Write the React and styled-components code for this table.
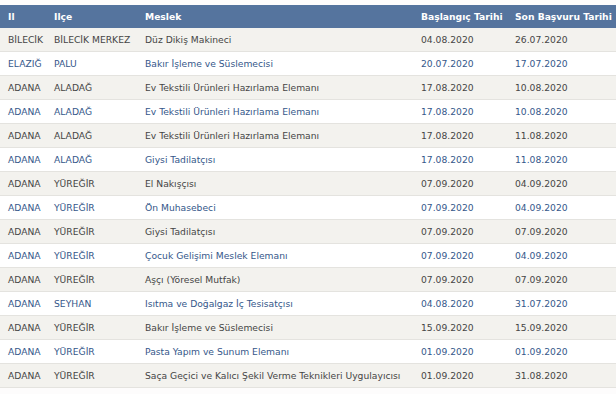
import styled, { createGlobalStyle } from "styled-components"

const GlobalStyle = createGlobalStyle`
  html, body { margin: 0; padding: 0; background: #ffffff; }
  body { font-family: "DejaVu Sans", Verdana, sans-serif; }
`

const rows = [
  ["BİLECİK", "BİLECİK MERKEZ", "Düz Dikiş Makineci", "04.08.2020", "26.07.2020"],
  ["ELAZIĞ", "PALU", "Bakır İşleme ve Süslemecisi", "20.07.2020", "17.07.2020"],
  ["ADANA", "ALADAĞ", "Ev Tekstili Ürünleri Hazırlama Elemanı", "17.08.2020", "10.08.2020"],
  ["ADANA", "ALADAĞ", "Ev Tekstili Ürünleri Hazırlama Elemanı", "17.08.2020", "10.08.2020"],
  ["ADANA", "ALADAĞ", "Ev Tekstili Ürünleri Hazırlama Elemanı", "17.08.2020", "11.08.2020"],
  ["ADANA", "ALADAĞ", "Giysi Tadilatçısı", "17.08.2020", "11.08.2020"],
  ["ADANA", "YÜREĞİR", "El Nakışçısı", "07.09.2020", "04.09.2020"],
  ["ADANA", "YÜREĞİR", "Ön Muhasebeci", "07.09.2020", "04.09.2020"],
  ["ADANA", "YÜREĞİR", "Giysi Tadilatçısı", "07.09.2020", "07.09.2020"],
  ["ADANA", "YÜREĞİR", "Çocuk Gelişimi Meslek Elemanı", "07.09.2020", "04.09.2020"],
  ["ADANA", "YÜREĞİR", "Aşçı (Yöresel Mutfak)", "07.09.2020", "07.09.2020"],
  ["ADANA", "SEYHAN", "Isıtma ve Doğalgaz İç Tesisatçısı", "04.08.2020", "31.07.2020"],
  ["ADANA", "YÜREĞİR", "Bakır İşleme ve Süslemecisi", "15.09.2020", "15.09.2020"],
  ["ADANA", "YÜREĞİR", "Pasta Yapım ve Sunum Elemanı", "01.09.2020", "01.09.2020"],
  ["ADANA", "YÜREĞİR", "Saça Geçici ve Kalıcı Şekil Verme Teknikleri Uygulayıcısı", "01.09.2020", "31.08.2020"],
]

const columns = "46px 91px 276px 94px 109px"

const Page = styled.div`
  width: 616px;
  height: 394px;
  overflow: hidden;
  padding-top: 5px;
  box-sizing: border-box;
  background: #fdfcfc;
  font-size: 9.2px;
`

const HeaderRow = styled.div`
  display: grid;
  grid-template-columns: ${columns};
  height: 23px;
  align-items: center;
  background: #55749e;
  color: #ffffff;
  font-weight: bold;
`

const Row = styled.div`
  display: grid;
  grid-template-columns: ${columns};
  height: 23px;
  align-items: center;
  background: ${p => (p.$odd ? "#f3f2ee" : "#ffffff")};
  color: ${p => (p.$odd ? "#454545" : "#35578a")};
  border-bottom: 1px solid #e4e3df;
`

const Cell = styled.div`
  padding-left: 8px;
  white-space: nowrap;
  overflow: hidden;
`

export default function App() {
  return (
    <>
      <GlobalStyle />
      <Page>
        <HeaderRow>
          <Cell>Il</Cell>
          <Cell>Ilçe</Cell>
          <Cell>Meslek</Cell>
          <Cell>Başlangıç Tarihi</Cell>
          <Cell>Son Başvuru Tarihi</Cell>
        </HeaderRow>
        {rows.map((r, i) => (
          <Row key={i} $odd={i % 2 === 0}>
            {r.map((c, j) => (
              <Cell key={j}>{c}</Cell>
            ))}
          </Row>
        ))}
      </Page>
    </>
  )
}
